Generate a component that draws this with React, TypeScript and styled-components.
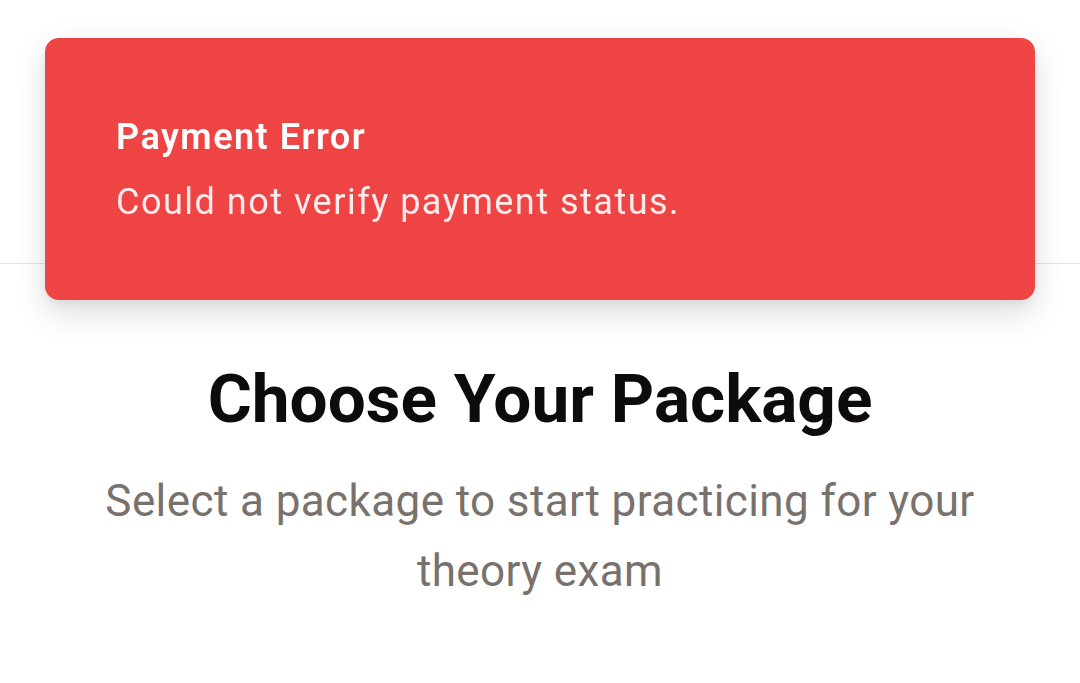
import React from "react";
import styled, { createGlobalStyle } from "styled-components";

const GlobalStyle = createGlobalStyle`
  * { box-sizing: border-box; }
  html, body { margin: 0; padding: 0; background: #ffffff; }
  body { font-family: Roboto, "Noto Sans", "Liberation Sans", sans-serif; }
`;

const Page = styled.div`
  min-height: 683px;
  display: flex;
  flex-direction: column;
  background: #ffffff;
`;

const Header = styled.header`
  height: 264px;
  border-bottom: 1px solid #e4e4e4;
  background: #ffffff;
`;

const Main = styled.main`
  display: flex;
  flex-direction: column;
  align-items: center;
  padding: 94px 72px 0;
  text-align: center;
`;

const Title = styled.h1`
  margin: 0;
  font-size: 67.5px;
  line-height: 82px;
  font-weight: 700;
  color: #0d0c0b;
  letter-spacing: 0;
`;

const Subtitle = styled.p`
  margin: 26px 0 0;
  font-size: 44px;
  line-height: 70px;
  font-weight: 400;
  letter-spacing: 0.4px;
  color: #78716c;
`;

const Toast = styled.div`
  position: fixed;
  top: 38px;
  left: 45px;
  right: 45px;
  height: 262px;
  padding: 0 71px;
  display: flex;
  flex-direction: column;
  justify-content: center;
  gap: 17px;
  background: #ef4444;
  border-radius: 14px;
  box-shadow: 0 12px 32px rgba(0, 0, 0, 0.14), 0 4px 10px rgba(0, 0, 0, 0.06);
`;

const ToastTitle = styled.div`
  font-size: 36px;
  line-height: 48px;
  font-weight: 600;
  letter-spacing: 1.5px;
  color: #ffffff;
`;

const ToastText = styled.div`
  font-size: 36px;
  line-height: 48px;
  font-weight: 400;
  letter-spacing: 1.5px;
  color: rgba(255, 255, 255, 0.9);
`;

export default function App() {
  return (
    <>
      <GlobalStyle />
      <Page>
        <Header />
        <Main>
          <Title>Choose Your Package</Title>
          <Subtitle>Select a package to start practicing for your theory exam</Subtitle>
        </Main>
      </Page>
      <Toast role="alert">
        <ToastTitle>Payment Error</ToastTitle>
        <ToastText>Could not verify payment status.</ToastText>
      </Toast>
    </>
  );
}
